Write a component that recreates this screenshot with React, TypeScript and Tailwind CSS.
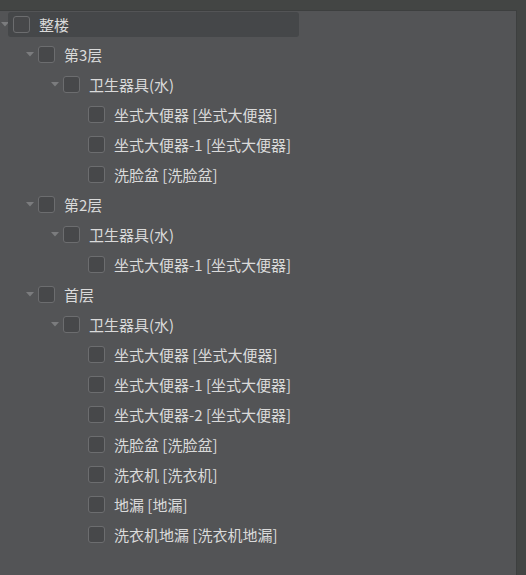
import React from "react";

type Node = { label: string; level: number; hasChildren?: boolean; selected?: boolean };

const rows: Node[] = [
  { label: "整楼", level: 0, hasChildren: true, selected: true },
  { label: "第3层", level: 1, hasChildren: true },
  { label: "卫生器具(水)", level: 2, hasChildren: true },
  { label: "坐式大便器 [坐式大便器]", level: 3 },
  { label: "坐式大便器-1 [坐式大便器]", level: 3 },
  { label: "洗脸盆 [洗脸盆]", level: 3 },
  { label: "第2层", level: 1, hasChildren: true },
  { label: "卫生器具(水)", level: 2, hasChildren: true },
  { label: "坐式大便器-1 [坐式大便器]", level: 3 },
  { label: "首层", level: 1, hasChildren: true },
  { label: "卫生器具(水)", level: 2, hasChildren: true },
  { label: "坐式大便器 [坐式大便器]", level: 3 },
  { label: "坐式大便器-1 [坐式大便器]", level: 3 },
  { label: "坐式大便器-2 [坐式大便器]", level: 3 },
  { label: "洗脸盆 [洗脸盆]", level: 3 },
  { label: "洗衣机 [洗衣机]", level: 3 },
  { label: "地漏 [地漏]", level: 3 },
  { label: "洗衣机地漏 [洗衣机地漏]", level: 3 },
];

const indent: Record<number, string> = {
  0: "pl-[0px]",
  1: "pl-[25px]",
  2: "pl-[50px]",
  3: "pl-[75px]",
};

function Arrow({ show }: { show?: boolean }) {
  return (
    <div className="w-[13px] h-full flex items-center shrink-0">
      {show && (
        <svg width="8" height="5" viewBox="0 0 8 5" className="ml-[1px]">
          <path d="M0 0 L8 0 L4 4.5 Z" fill="#7b7c7e" />
        </svg>
      )}
    </div>
  );
}

function Box() {
  return (
    <div className="w-[17px] h-[17px] rounded-[3px] border border-[#6c6d6f] bg-[#47484a] shrink-0" />
  );
}

export default function App() {
  return (
    <div
      className="w-[526px] h-[575px] bg-[#434544] pt-[10px] overflow-hidden"
      style={{ fontFamily: '"Noto Sans CJK SC", "Noto Sans", sans-serif' }}
    >
      <div className="w-[517px] h-[565px] bg-[#535456] border-t border-r border-[#3d3f3f]">
        <div className="-mt-[2px]">
          {rows.map((r, i) => (
            <div key={i} className={`h-[30px] flex items-center ${indent[r.level]}`}>
              <Arrow show={r.hasChildren} />
              {r.selected ? (
                <div className="flex items-center ml-[-5px] pl-[5px] w-[291px] h-[25px] rounded-[3px] bg-[#454749]">
                  <Box />
                  <span className="ml-[9px] text-[15px] leading-none text-[#dadada] whitespace-nowrap">{r.label}</span>
                </div>
              ) : (
                <>
                  <Box />
                  <span className="ml-[9px] text-[15px] leading-none text-[#dadada] whitespace-nowrap">{r.label}</span>
                </>
              )}
            </div>
          ))}
        </div>
      </div>
    </div>
  );
}
